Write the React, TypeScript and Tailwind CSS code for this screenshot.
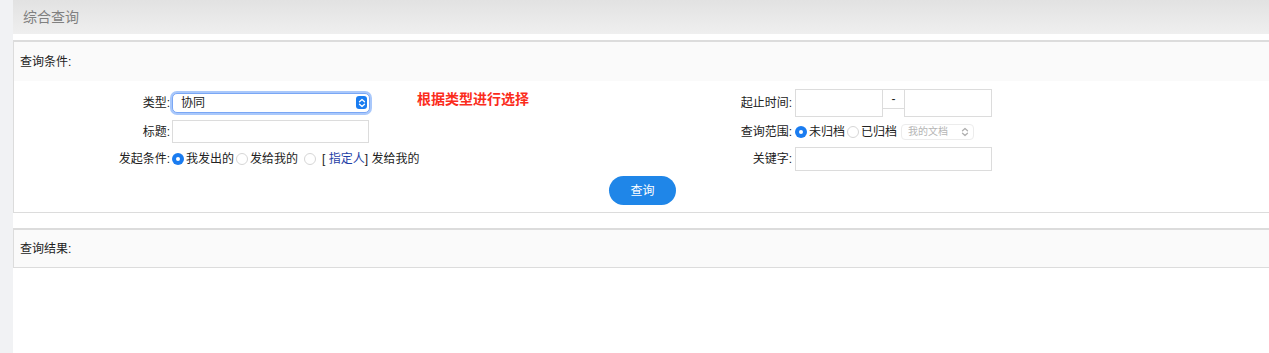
import React, { useState } from 'react';

const font = { fontFamily: '"Liberation Sans", "Noto Sans CJK SC", sans-serif' };

const Radio: React.FC<{ checked?: boolean; onClick?: () => void }> = ({ checked, onClick }) => (
  <span
    onClick={onClick}
    className={
      checked
        ? 'inline-flex w-[12px] h-[12px] rounded-full bg-[#1a7cf0] items-center justify-center mr-[2px] cursor-pointer'
        : 'inline-flex w-[12px] h-[12px] rounded-full border border-[#d6d6d6] bg-white mr-[2px] cursor-pointer'
    }
  >
    {checked && <span className="w-[4px] h-[4px] rounded-full bg-white" />}
  </span>
);

const UpDown: React.FC<{ color: string }> = ({ color }) => (
  <svg width="8" height="10" viewBox="0 0 8 10" fill="none" stroke={color} strokeWidth="1.3" strokeLinecap="round" strokeLinejoin="round">
    <path d="M1.5 3.8 L4 1.5 L6.5 3.8" />
    <path d="M1.5 6.2 L4 8.5 L6.5 6.2" />
  </svg>
);

const App: React.FC = () => {
  const [sender, setSender] = useState<number>(0);
  const [scope, setScope] = useState<number>(0);

  return (
    <div className="flex min-h-[353px] bg-white text-[12px] text-[#222]" style={font}>
      {/* left strip */}
      <div className="w-[13px] shrink-0 bg-[#f1f2f4]" />

      <div className="flex-1 flex flex-col">
        {/* page title */}
        <div className="h-[34px] bg-gradient-to-b from-[#e2e2e2] to-[#efefef] flex items-center pl-[10px]">
          <span className="text-[14px] text-[#808080]">综合查询</span>
        </div>

        {/* query conditions */}
        <div className="mt-[6px] border-t-2 border-l border-b border-[#dcdcdc]">
          <div className="h-[39px] bg-[#fafafa] flex items-center pl-[6px]">查询条件:</div>

          <div className="pt-[6px] pb-[7px]">
            <div className="grid grid-cols-[158px_465px_158px_1fr] grid-rows-[31px_27px_28px] items-center">
              {/* row 1 */}
              <div className="text-right pr-[2px]">类型:</div>
              <div className="flex items-center">
                <div className="w-[198px] h-[20px] rounded-[5px] border border-[#7aa7f5] ring-2 ring-[#a9c8fb] bg-white flex items-center justify-between pl-[8px] pr-[2px]">
                  <span>协同</span>
                  <span className="w-[11px] h-[13px] rounded-[3px] bg-[#1a7cf0] flex items-center justify-center">
                    <UpDown color="#ffffff" />
                  </span>
                </div>
                <span className="ml-[47px] -mt-[6px] text-[14px] font-bold text-[#fb2c1c]">根据类型进行选择</span>
              </div>
              <div className="text-right pr-[3px]">起止时间:</div>
              <div className="flex items-start self-start pt-[2px]">
                <div className="w-[88px] h-[28px] border border-[#dcdcdc] bg-white" />
                <div className="w-[21px] h-[20px] border-t border-b border-[#dcdcdc] flex items-center justify-center text-[12px]">-</div>
                <div className="w-[88px] h-[28px] border border-[#dcdcdc] bg-white" />
              </div>

              {/* row 2 */}
              <div className="text-right pr-[2px]">标题:</div>
              <div>
                <div className="w-[197px] h-[23px] border border-[#dcdcdc] bg-white" />
              </div>
              <div className="text-right pr-[3px]">查询范围:</div>
              <div className="flex items-center">
                <Radio checked={scope === 0} onClick={() => setScope(0)} />
                <span className="mr-[2px]">未归档</span>
                <Radio checked={scope === 1} onClick={() => setScope(1)} />
                <span className="mr-[4px]">已归档</span>
                <div className="w-[73px] h-[16px] rounded-[4px] border border-[#ececec] bg-white flex items-center justify-between pl-[6px] pr-[4px] text-[10px] text-[#b5b5b5]">
                  <span>我的文档</span>
                  <UpDown color="#b0b0b0" />
                </div>
              </div>

              {/* row 3 */}
              <div className="text-right pr-[2px]">发起条件:</div>
              <div className="flex items-center">
                <Radio checked={sender === 0} onClick={() => setSender(0)} />
                <span className="mr-[2px]">我发出的</span>
                <Radio checked={sender === 1} onClick={() => setSender(1)} />
                <span className="mr-[6px]">发给我的</span>
                <Radio checked={sender === 2} onClick={() => setSender(2)} />
                <span className="ml-[4px]">
                  [ <span className="text-[#1f3fa6]">指定人</span>] 发给我的
                </span>
              </div>
              <div className="text-right pr-[3px]">关键字:</div>
              <div>
                <div className="w-[197px] h-[24px] border border-[#dcdcdc] bg-white" />
              </div>
            </div>

            <div className="flex justify-center mt-[3px] pl-[2px]">
              <button className="w-[67px] h-[29px] rounded-full bg-[#1f86e8] text-white text-[12px]">查询</button>
            </div>
          </div>
        </div>

        {/* query results */}
        <div className="mt-[15px] border-t-2 border-l border-b border-[#dcdcdc] h-[40px] bg-[#fafafa] flex items-center pl-[6px]">
          查询结果:
        </div>

        <div className="flex-1 bg-white" />
      </div>
    </div>
  );
};

export default App;
